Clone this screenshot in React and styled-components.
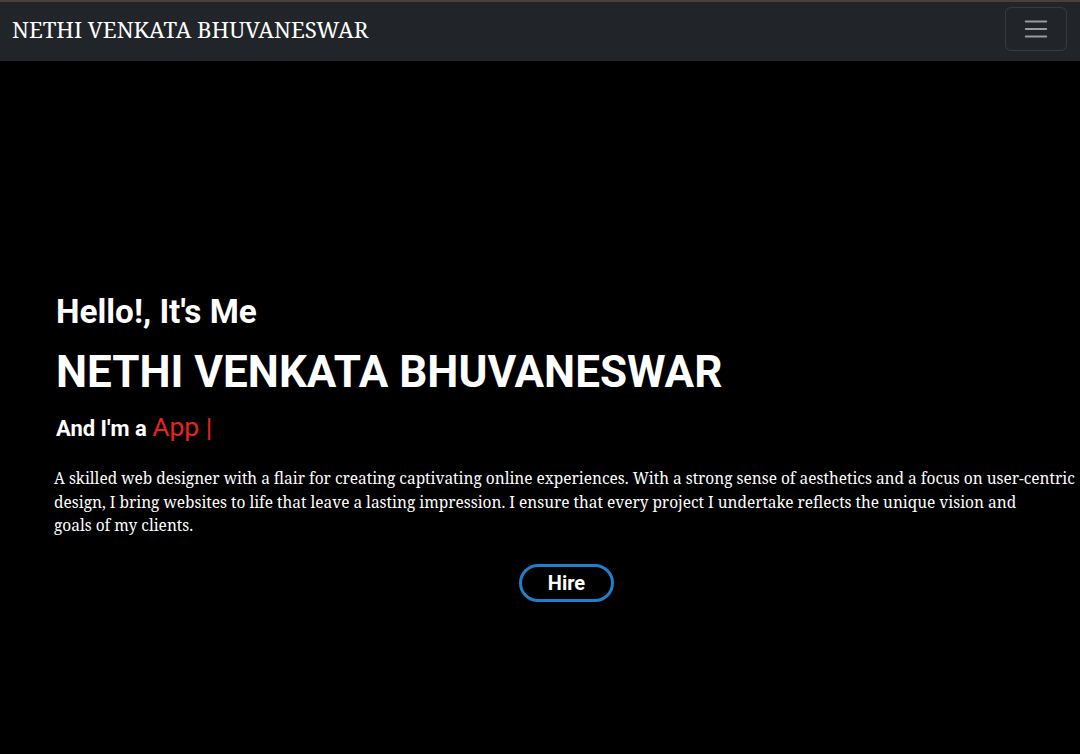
import React from "react";
import styled, { createGlobalStyle } from "styled-components";

const GlobalStyle = createGlobalStyle`
  html, body {
    margin: 0;
    padding: 0;
    background: #000;
  }
  * {
    box-sizing: border-box;
  }
`;

const Page = styled.div`
  min-height: 754px;
  background: #000;
  border-top: 2px solid #4b3f3c;
`;

const Navbar = styled.nav`
  display: flex;
  align-items: center;
  justify-content: space-between;
  height: 59px;
  padding: 0 13px 5px 12px;
  background: #212529;
`;

const Brand = styled.a`
  font-family: "Noto Serif", "DejaVu Serif", serif;
  font-size: 22.2px;
  color: #fff;
  text-decoration: none;
`;

const Toggler = styled.button`
  display: flex;
  align-items: center;
  justify-content: center;
  width: 62px;
  height: 44px;
  padding: 0;
  background: transparent;
  border: 1px solid rgba(255, 255, 255, 0.1);
  border-radius: 6px;
  cursor: pointer;
`;

const Hero = styled.section`
  padding: 232px 1px 0 54px;
  color: #fff;
`;

const Greeting = styled.h3`
  margin: 0 0 0 2px;
  font-family: Roboto, sans-serif;
  font-weight: 700;
  font-size: 33.3px;
  line-height: 38px;
`;

const Name = styled.h1`
  margin: 14px 0 0 2px;
  font-family: Roboto, sans-serif;
  font-weight: 700;
  font-size: 44px;
  line-height: 54px;
`;

const Role = styled.h4`
  margin: 10px 0 0 2px;
  font-family: Roboto, sans-serif;
  font-weight: 700;
  font-size: 22px;
  line-height: 36px;
`;

const Typed = styled.span`
  font-weight: 400;
  font-size: 26.5px;
  color: #e8231e;
`;

const About = styled.p`
  margin: 20px 0 0;
  font-family: "Noto Serif", "DejaVu Serif", serif;
  font-size: 15.45px;
  line-height: 23.5px;
`;

const Actions = styled.div`
  display: flex;
  justify-content: center;
  margin-top: 26px;
`;

const HireButton = styled.button`
  width: 95px;
  height: 38px;
  padding: 0;
  background: transparent;
  border: 3px solid #1f7fc8;
  border-radius: 20px;
  color: #fff;
  font-family: Roboto, sans-serif;
  font-weight: 700;
  font-size: 20px;
  cursor: pointer;
`;

function MenuIcon() {
  return (
    <svg width="28" height="28" viewBox="0 0 30 30" aria-hidden="true">
      <path
        d="M4 7h22M4 15h22M4 23h22"
        stroke="rgba(255,255,255,0.55)"
        strokeWidth="2"
        strokeLinecap="round"
        strokeMiterlimit="10"
      />
    </svg>
  );
}

export default function App() {
  return (
    <Page>
      <GlobalStyle />
      <Navbar>
        <Brand href="#">NETHI VENKATA BHUVANESWAR</Brand>
        <Toggler aria-label="Toggle navigation">
          <MenuIcon />
        </Toggler>
      </Navbar>
      <Hero>
        <Greeting>Hello!, It's Me</Greeting>
        <Name>NETHI VENKATA BHUVANESWAR</Name>
        <Role>
          And I'm a <Typed>App |</Typed>
        </Role>
        <About>
          A skilled web designer with a flair for creating captivating online experiences. With a strong
          sense of aesthetics and a focus on user-centric design, I bring websites to life that leave a
          lasting impression. I ensure that every project I undertake reflects the unique vision and
          <br />
          goals of my clients.
        </About>
        <Actions>
          <HireButton>Hire</HireButton>
        </Actions>
      </Hero>
    </Page>
  );
}
